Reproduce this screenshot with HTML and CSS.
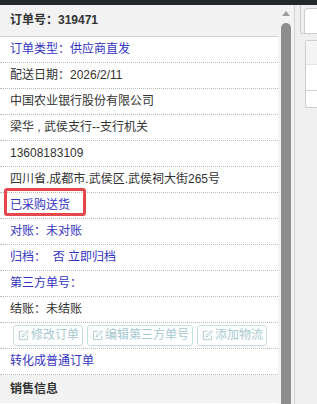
FILE: index.html
```html
<!DOCTYPE html>
<html lang="zh-CN">
<head>
    <meta charset="UTF-8">
    <title>订单详情</title>
    <link rel="stylesheet" href="styles.css">
</head>
<body>

<div class="topbar"></div>
<div class="frame">
    <div class="panel">
        <div class="panel-head">订单号：319471</div>
        <div class="row blue">订单类型：供应商直发</div>
        <div class="row">配送日期：2026/2/11</div>
        <div class="row">中国农业银行股份有限公司</div>
        <div class="row">梁华 , 武侯支行--支行机关</div>
        <div class="row">13608183109</div>
        <div class="row">四川省.成都市.武侯区.武侯祠大街265号</div>
        <div class="row blue marked">已采购送货</div>
        <div class="row blue">对账：未对账</div>
        <div class="row blue">归档：&nbsp;&nbsp;否 立即归档</div>
        <div class="row blue">第三方单号：</div>
        <div class="row">结账：未结账</div>
        <div class="row btn-row">
            <button class="btn"><svg width="11" height="11" viewBox="0 0 12 12"><path d="M6 1.5H1.5v9h9V6" fill="none" stroke="currentColor"/><path d="M4.5 7.5l.5-2 5-5 1.5 1.5-5 5z" fill="none" stroke="currentColor"/></svg>修改订单</button>
            <button class="btn"><svg width="11" height="11" viewBox="0 0 12 12"><path d="M6 1.5H1.5v9h9V6" fill="none" stroke="currentColor"/><path d="M4.5 7.5l.5-2 5-5 1.5 1.5-5 5z" fill="none" stroke="currentColor"/></svg>编辑第三方单号</button>
            <button class="btn"><svg width="11" height="11" viewBox="0 0 12 12"><path d="M6 1.5H1.5v9h9V6" fill="none" stroke="currentColor"/><path d="M4.5 7.5l.5-2 5-5 1.5 1.5-5 5z" fill="none" stroke="currentColor"/></svg>添加物流</button>
        </div>
        <div class="row blue">转化成普通订单</div>
        <div class="section-head">销售信息</div>
    </div>

    <div class="scroll">
        <div class="arrow"></div>
        <div class="thumb"></div>
    </div>

    <div class="side">
        <div class="tabbar"><div class="tab"></div></div>
        <div class="card">
            <div class="card-head"></div>
            <div class="card-row"></div>
        </div>
    </div>
</div>

</body>
</html>
```
FILE: styles.css
```css
body {
    margin: 0;
    width: 317px;
    height: 404px;
    overflow: hidden;
    background: #fff;
    color: #333;
    font: 12px "Liberation Sans", "Noto Sans CJK SC", sans-serif;
}

.topbar {
    height: 5px;
    background: #23282b;
}

.frame {
    display: flex;
    height: 399px;
}

.panel {
    width: 278px;
    flex: none;
    overflow: hidden;
}

.panel-head {
    height: 31px;
    line-height: 31px;
    padding-left: 10px;
    background: #f2f2f2;
    border-bottom: 1px solid #cfcfcf;
    font-weight: bold;
}

.row {
    position: relative;
    height: 25px;
    line-height: 25px;
    padding-left: 10px;
    border-bottom: 1px dotted #bbb;
    white-space: nowrap;
}

.blue {
    color: #3434c2;
}

.marked::after {
    content: "";
    position: absolute;
    left: 4px;
    top: -5px;
    width: 76px;
    height: 22px;
    border: 3px solid #e4484c;
    border-radius: 3px;
}

.btn-row {
    display: flex;
    align-items: center;
    gap: 4px;
    padding-left: 13px;
}

.btn {
    display: flex;
    align-items: center;
    gap: 2px;
    height: 21px;
    padding: 0 3px 0 4px;
    background: #fff;
    border: 1px solid #c5e0e4;
    border-radius: 3px;
    color: #a6c8cf;
    font: inherit;
}

.section-head {
    height: 28px;
    line-height: 28px;
    padding-left: 10px;
    background: #f2f2f2;
    font-weight: bold;
}

.scroll {
    width: 16px;
    flex: none;
    display: flex;
    flex-direction: column;
    align-items: center;
    background: #f3f3f3;
}

.arrow {
    margin-top: 6px;
    width: 0;
    height: 0;
    border-left: 4px solid transparent;
    border-right: 4px solid transparent;
    border-bottom: 5px solid #9e9e9e;
}

.thumb {
    margin-top: 7px;
    width: 10px;
    flex: 1;
    background: #8d8d8d;
    border-radius: 5px 5px 0 0;
}

.side {
    flex: 1;
    background: #efefef;
    border-left: 1px solid #d3d3d3;
}

.tabbar {
    margin-left: 5px;
    height: 25px;
    padding: 3px 0 0 3px;
    border-left: 1px solid #cdcdcd;
    border-bottom: 1px solid #cdcdcd;
    border-bottom-left-radius: 3px;
}

.tab {
    height: 24px;
    background: #fff;
    border: 1px solid #cdcdcd;
    border-right: none;
    border-bottom: none;
    border-top-left-radius: 4px;
}

.card {
    margin: 6px 0 0 10px;
    height: 66px;
    background: #fff;
    border: 1px solid #cdcdcd;
    border-right: none;
    border-radius: 3px 0 0 3px;
}

.card-head {
    height: 23px;
    background: #f4f4f4;
    border-bottom: 1px solid #e2e2e2;
}

.card-row {
    height: 25px;
    border-bottom: 1px solid #d0d0d0;
}
```
